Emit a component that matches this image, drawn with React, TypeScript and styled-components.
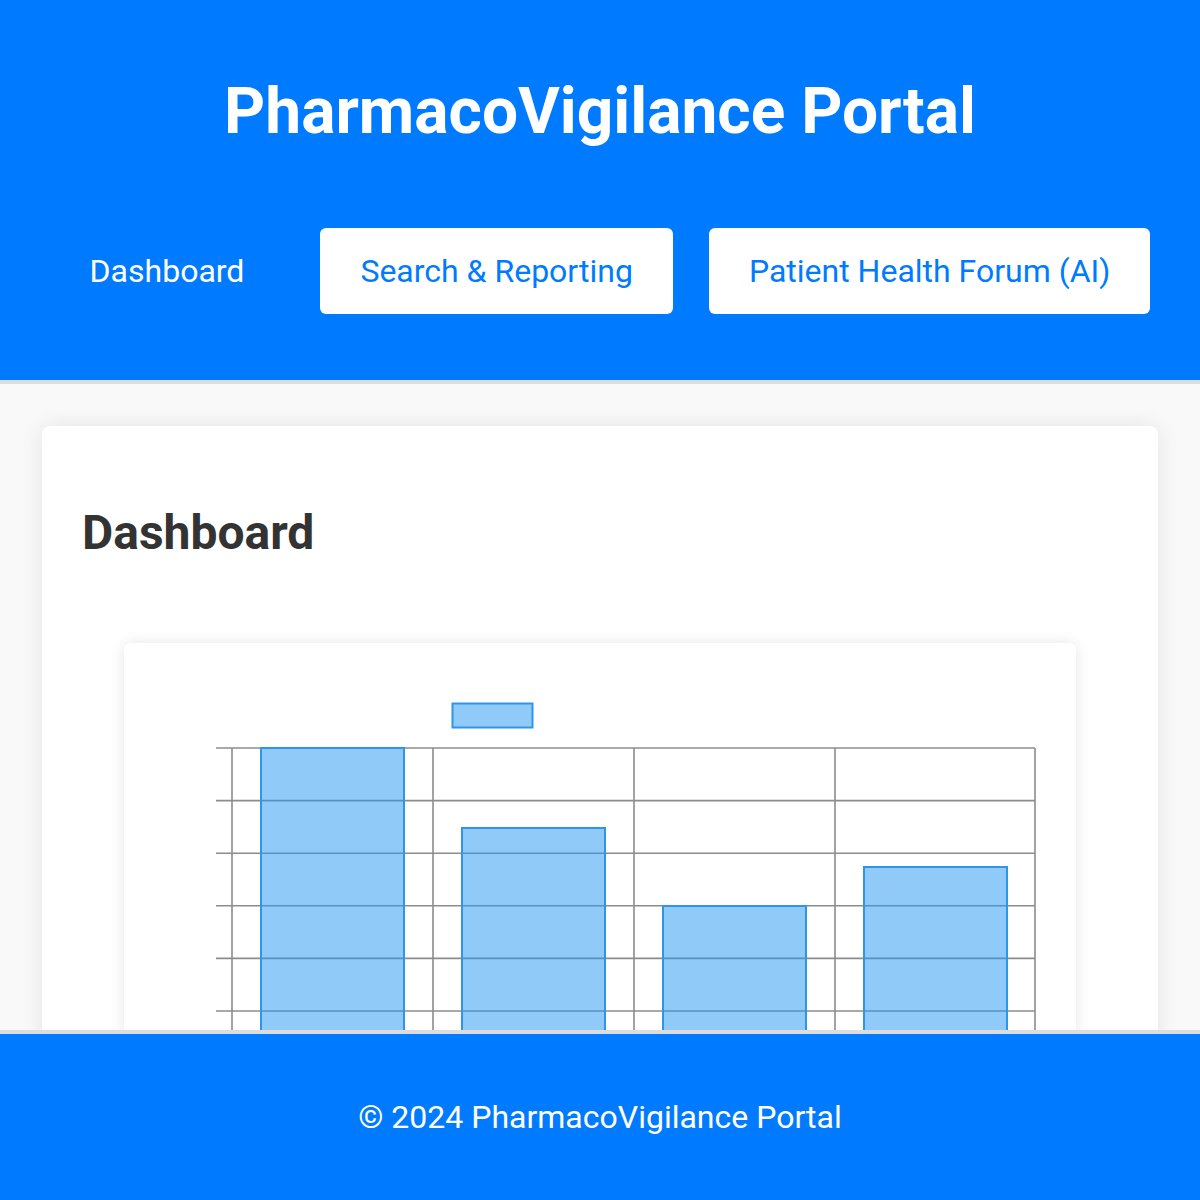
import React from "react";
import styled, { createGlobalStyle } from "styled-components";

const Global = createGlobalStyle`
  html, body { margin: 0; padding: 0; }
  body {
    font-family: Roboto, "Noto Sans", Arial, sans-serif;
    background: #f9f9f9;
  }
`;

const Header = styled.header`
  background: #007bff;
  color: #fff;
  padding: 70px 0 66px;
  border-bottom: 4px solid #dddddd;
  text-align: center;
`;

const Title = styled.h1`
  margin: 0;
  font-size: 64px;
  line-height: 84px;
  font-weight: 700;
`;

const Nav = styled.nav`
  margin-top: 74px;
  display: flex;
  justify-content: center;
  gap: 36px;
`;

const NavItem = styled.a<{ $active?: boolean }>`
  display: block;
  height: 86px;
  line-height: 86px;
  padding: 0 40px;
  border-radius: 6px;
  font-size: 32px;
  text-decoration: none;
  background: ${(p) => (p.$active ? "transparent" : "#ffffff")};
  color: ${(p) => (p.$active ? "#ffffff" : "#007bff")};
`;

const Main = styled.main`
  padding: 42px 42px 220px;
`;

const Card = styled.section`
  background: #fff;
  border-radius: 8px;
  padding: 40px;
  box-shadow: 0 0 22px rgba(0, 0, 0, 0.09);
`;

const Heading = styled.h2`
  margin: 39px 0 0;
  font-size: 48px;
  line-height: 56px;
  font-weight: 700;
  color: #333;
`;

const ChartBox = styled.div`
  margin: 82px 42px 0;
  background: #fff;
  border-radius: 6px;
  box-shadow: 0 0 14px rgba(0, 0, 0, 0.1);
  height: 720px;
  overflow: hidden;
`;

const Footer = styled.footer`
  position: fixed;
  left: 0;
  right: 0;
  bottom: 0;
  height: 166px;
  background: #007bff;
  border-top: 4px solid #dddddd;
  color: #fff;
  display: flex;
  align-items: center;
  justify-content: center;
  font-size: 32px;
`;

const grid = "#8c8c8c";
const top = 105;
const vLines = [108, 309, 510, 711, 911];
const hLines = Array.from({ length: 12 }, (_, i) => top + i * 52.6);
const bars = [
  { x: 137, top: 105 },
  { x: 338, top: 185 },
  { x: 539, top: 263 },
  { x: 740, top: 224 },
];

function Chart() {
  return (
    <svg width="952" height="720" viewBox="0 0 952 720">
      <rect x="328.5" y="60.5" width="80" height="24" fill="rgba(33,150,243,0.5)" stroke="#2f95e8" strokeWidth="2" />
      {hLines.map((y) => (
        <line key={y} x1="92" x2="911" y1={y} y2={y} stroke={grid} strokeWidth="1.6" />
      ))}
      {vLines.map((x) => (
        <line key={x} x1={x} x2={x} y1={top} y2="720" stroke={grid} strokeWidth="1.6" />
      ))}
      {bars.map((b) => (
        <rect
          key={b.x}
          x={b.x}
          y={b.top}
          width="143"
          height={720 - b.top}
          fill="rgba(33,150,243,0.5)"
          stroke="#2f95e8"
          strokeWidth="2"
        />
      ))}
    </svg>
  );
}

export default function App() {
  return (
    <>
      <Global />
      <Header>
        <Title>PharmacoVigilance Portal</Title>
        <Nav>
          <NavItem $active href="#">Dashboard</NavItem>
          <NavItem href="#">Search &amp; Reporting</NavItem>
          <NavItem href="#">Patient Health Forum (AI)</NavItem>
        </Nav>
      </Header>
      <Main>
        <Card>
          <Heading>Dashboard</Heading>
          <ChartBox>
            <Chart />
          </ChartBox>
        </Card>
      </Main>
      <Footer>© 2024 PharmacoVigilance Portal</Footer>
    </>
  );
}
